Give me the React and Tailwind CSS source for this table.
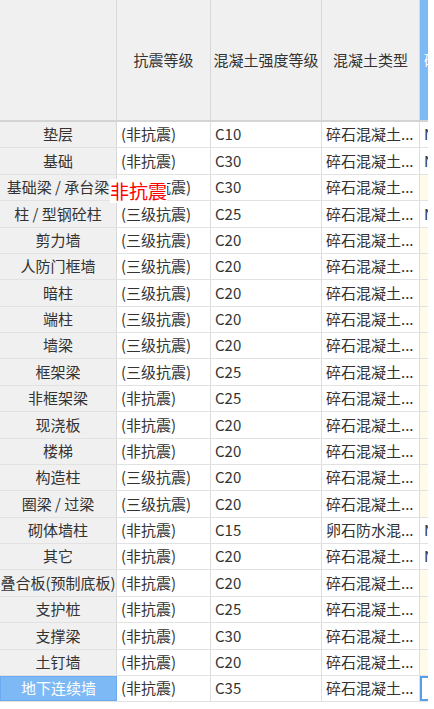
const rows = [
  { name: "垫层", level: "(非抗震)", grade: "C10", type: "碎石混凝土...", extra: "N" },
  { name: "基础", level: "(非抗震)", grade: "C30", type: "碎石混凝土...", extra: "N" },
  { name: "基础梁 / 承台梁", level: "(三级抗震)", grade: "C30", type: "碎石混凝土..." },
  { name: "柱 / 型钢砼柱", level: "(三级抗震)", grade: "C25", type: "碎石混凝土...", extra: "N" },
  { name: "剪力墙", level: "(三级抗震)", grade: "C20", type: "碎石混凝土..." },
  { name: "人防门框墙", level: "(三级抗震)", grade: "C20", type: "碎石混凝土..." },
  { name: "暗柱", level: "(三级抗震)", grade: "C20", type: "碎石混凝土..." },
  { name: "端柱", level: "(三级抗震)", grade: "C20", type: "碎石混凝土..." },
  { name: "墙梁", level: "(三级抗震)", grade: "C20", type: "碎石混凝土..." },
  { name: "框架梁", level: "(三级抗震)", grade: "C25", type: "碎石混凝土..." },
  { name: "非框架梁", level: "(非抗震)", grade: "C25", type: "碎石混凝土..." },
  { name: "现浇板", level: "(非抗震)", grade: "C20", type: "碎石混凝土..." },
  { name: "楼梯", level: "(非抗震)", grade: "C20", type: "碎石混凝土..." },
  { name: "构造柱", level: "(三级抗震)", grade: "C20", type: "碎石混凝土..." },
  { name: "圈梁 / 过梁", level: "(三级抗震)", grade: "C20", type: "碎石混凝土..." },
  { name: "砌体墙柱", level: "(非抗震)", grade: "C15", type: "卵石防水混...", extra: "N" },
  { name: "其它", level: "(非抗震)", grade: "C20", type: "碎石混凝土...", extra: "N" },
  { name: "叠合板(预制底板)", level: "(非抗震)", grade: "C20", type: "碎石混凝土..." },
  { name: "支护桩", level: "(非抗震)", grade: "C25", type: "碎石混凝土..." },
  { name: "支撑梁", level: "(非抗震)", grade: "C30", type: "碎石混凝土..." },
  { name: "土钉墙", level: "(非抗震)", grade: "C20", type: "碎石混凝土..." },
  { name: "地下连续墙", level: "(非抗震)", grade: "C35", type: "碎石混凝土...", selected: true },
]

const cell = "h-full flex items-center overflow-hidden whitespace-nowrap border-r border-[#dedede]"

const App = () => {
  return (
    <div
      className="relative w-[434px] h-[709px] bg-white overflow-hidden text-[15px] text-[#333]"
      style={{ fontFamily: '"Noto Sans CJK SC", "Noto Sans", sans-serif' }}
    >
      <div className="w-[428px] overflow-hidden">
        {/* header */}
        <div className="flex h-[122px] bg-[#f0f0f0] border-b-2 border-[#d4d4d4]">
          <div className="w-[117px] shrink-0 border-r border-[#d8d8d8]" />
          <div className="w-[94px] shrink-0 flex items-center justify-center border-r border-[#d8d8d8]">抗震等级</div>
          <div className="w-[111px] shrink-0 flex items-center justify-center whitespace-nowrap border-r border-[#d8d8d8]">混凝土强度等级</div>
          <div className="w-[98px] shrink-0 flex items-center justify-center border-r border-[#d8d8d8]">混凝土类型</div>
          <div className="flex-1 flex items-center pl-[4px] bg-[#7db9f5] text-white whitespace-nowrap overflow-hidden">砼标号</div>
        </div>

        {/* body */}
        {rows.map((r) => (
          <div key={r.name} className="flex h-[26.38px] border-b border-[#e2e2e2]">
            <div
              className={
                r.selected
                  ? "w-[117px] shrink-0 h-full flex items-center justify-center overflow-hidden whitespace-nowrap bg-[#7db9f5] text-white border border-[#6aaaf0]"
                  : "w-[117px] shrink-0 h-full flex items-center justify-center overflow-hidden whitespace-nowrap bg-[#f0f0f0] border-r border-[#d8d8d8]"
              }
            >
              {r.name}
            </div>
            <div className={`w-[94px] shrink-0 pl-[4px] ${cell}`}>{r.level}</div>
            <div className={`w-[111px] shrink-0 pl-[4px] ${cell}`}>{r.grade}</div>
            <div className={`w-[98px] shrink-0 pl-[4px] ${cell}`}>{r.type}</div>
            {r.selected ? (
              <div className="flex-1 h-full bg-white border-2 border-r-0 border-[#5b9ee8]" />
            ) : (
              <div
                className={`flex-1 h-full flex items-center pl-[4px] overflow-hidden whitespace-nowrap ${
                  r.extra ? "bg-white" : "bg-[#fefbea]"
                }`}
              >
                {r.extra}
              </div>
            )}
          </div>
        ))}
      </div>

      {/* drag label */}
      <span className="absolute left-[110px] top-[179px] bg-white text-[19px] leading-[24px] text-[#ff0000]">非抗震</span>
    </div>
  )
}

export default App
